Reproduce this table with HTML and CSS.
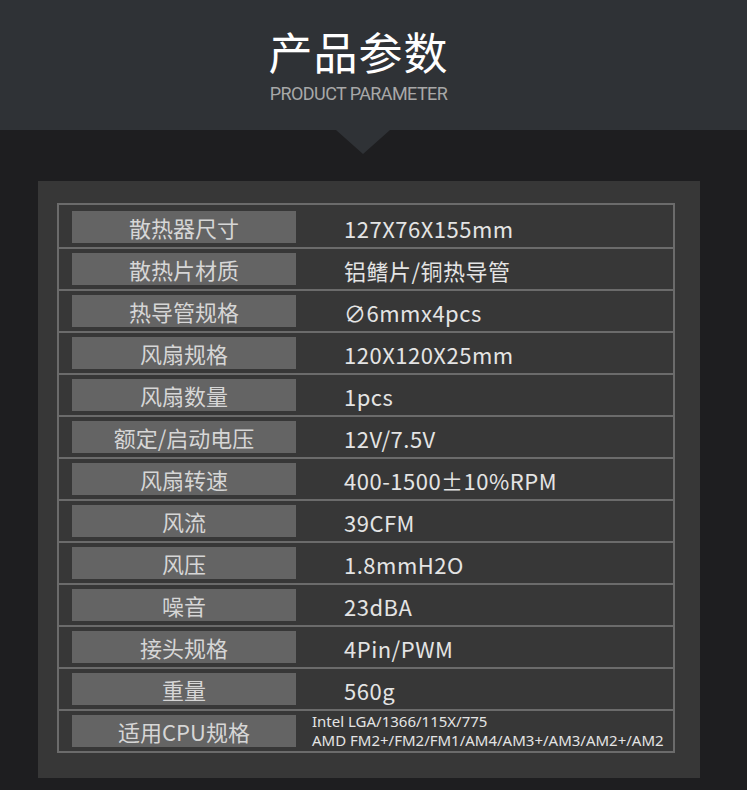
FILE: index.html
```html
<!DOCTYPE html>
<html lang="zh-CN">
<head>
    <meta charset="UTF-8">
    <meta name="viewport" content="width=device-width, initial-scale=1.0">
    <title>产品参数</title>
    <link rel="stylesheet" href="styles.css">
</head>
<body>
<!-- Шапка раздела -->
<header class="banner">
    <h1 class="banner-title">产品参数</h1>
    <p class="banner-sub">PRODUCT PARAMETER</p>
</header>

<!-- Таблица параметров -->
<section class="panel">
    <div class="spec-table">
        <div class="spec-row"><div class="spec-label">散热器尺寸</div><div class="spec-value">127X76X155mm</div></div>
        <div class="spec-row"><div class="spec-label">散热片材质</div><div class="spec-value">铝鳍片/铜热导管</div></div>
        <div class="spec-row"><div class="spec-label">热导管规格</div><div class="spec-value">∅6mmx4pcs</div></div>
        <div class="spec-row"><div class="spec-label">风扇规格</div><div class="spec-value">120X120X25mm</div></div>
        <div class="spec-row"><div class="spec-label">风扇数量</div><div class="spec-value">1pcs</div></div>
        <div class="spec-row"><div class="spec-label">额定/启动电压</div><div class="spec-value">12V/7.5V</div></div>
        <div class="spec-row"><div class="spec-label">风扇转速</div><div class="spec-value">400-1500±10%RPM</div></div>
        <div class="spec-row"><div class="spec-label">风流</div><div class="spec-value">39CFM</div></div>
        <div class="spec-row"><div class="spec-label">风压</div><div class="spec-value">1.8mmH2O</div></div>
        <div class="spec-row"><div class="spec-label">噪音</div><div class="spec-value">23dBA</div></div>
        <div class="spec-row"><div class="spec-label">接头规格</div><div class="spec-value">4Pin/PWM</div></div>
        <div class="spec-row"><div class="spec-label">重量</div><div class="spec-value">560g</div></div>
        <div class="spec-row"><div class="spec-label">适用CPU规格</div>
            <div class="spec-value small">Intel LGA/1366/115X/775<br>AMD FM2+/FM2/FM1/AM4/AM3+/AM3/AM2+/AM2</div>
        </div>
    </div>
</section>
</body>
</html>
```

FILE: styles.css
```css
/* Общие стили */
body {
    margin: 0;
    padding: 0;
    background: #1e1e20;
    font-family: 'Noto Sans CJK SC', 'Noto Sans', sans-serif;
    color: #e4e4e4;
    min-height: 790px;
}

/* Шапка */
.banner {
    position: relative;
    height: 130px;
    background: #2f3236;
    display: flex;
    flex-direction: column;
    align-items: center;
    box-sizing: border-box;
    padding-top: 25px;
    padding-right: 30px;
}

.banner::after {
    content: '';
    position: absolute;
    left: 336px;
    top: 130px;
    border-left: 27px solid transparent;
    border-right: 27px solid transparent;
    border-top: 24px solid #2f3236;
}

.banner-title {
    margin: 0;
    font-size: 44px;
    font-weight: 400;
    line-height: 52px;
    color: #ffffff;
    letter-spacing: 1px;
}

.banner-sub {
    margin: 7px 0 0;
    font-family: Roboto, sans-serif;
    font-size: 18px;
    line-height: 20px;
    color: #a8a8a8;
    letter-spacing: -0.6px;
}

/* Панель */
.panel {
    margin: 51px 0 0 38px;
    width: 662px;
    height: 597px;
    background: #373737;
    box-sizing: border-box;
    padding: 22px 25px 0 19px;
}

.spec-table {
    border: 2px solid #6b6b6b;
    padding-top: 2px;
}

.spec-row {
    display: flex;
    align-items: center;
    height: 40px;
    border-top: 2px solid #6b6b6b;
}

.spec-row:first-child {
    border-top: none;
}

.spec-label {
    width: 224px;
    height: 32px;
    margin-left: 13px;
    background: #646464;
    color: #d6d6d6;
    font-size: 22px;
    line-height: 32px;
    text-align: center;
}

.spec-value {
    margin-left: 48px;
    padding-top: 2px;
    font-size: 22px;
    line-height: 30px;
    letter-spacing: 0.5px;
}

.spec-value.small {
    margin-left: 16px;
    padding-top: 0;
    font-family: 'Noto Sans', 'Noto Sans CJK SC', sans-serif;
    font-size: 15px;
    line-height: 19px;
    letter-spacing: 0;
}
```
